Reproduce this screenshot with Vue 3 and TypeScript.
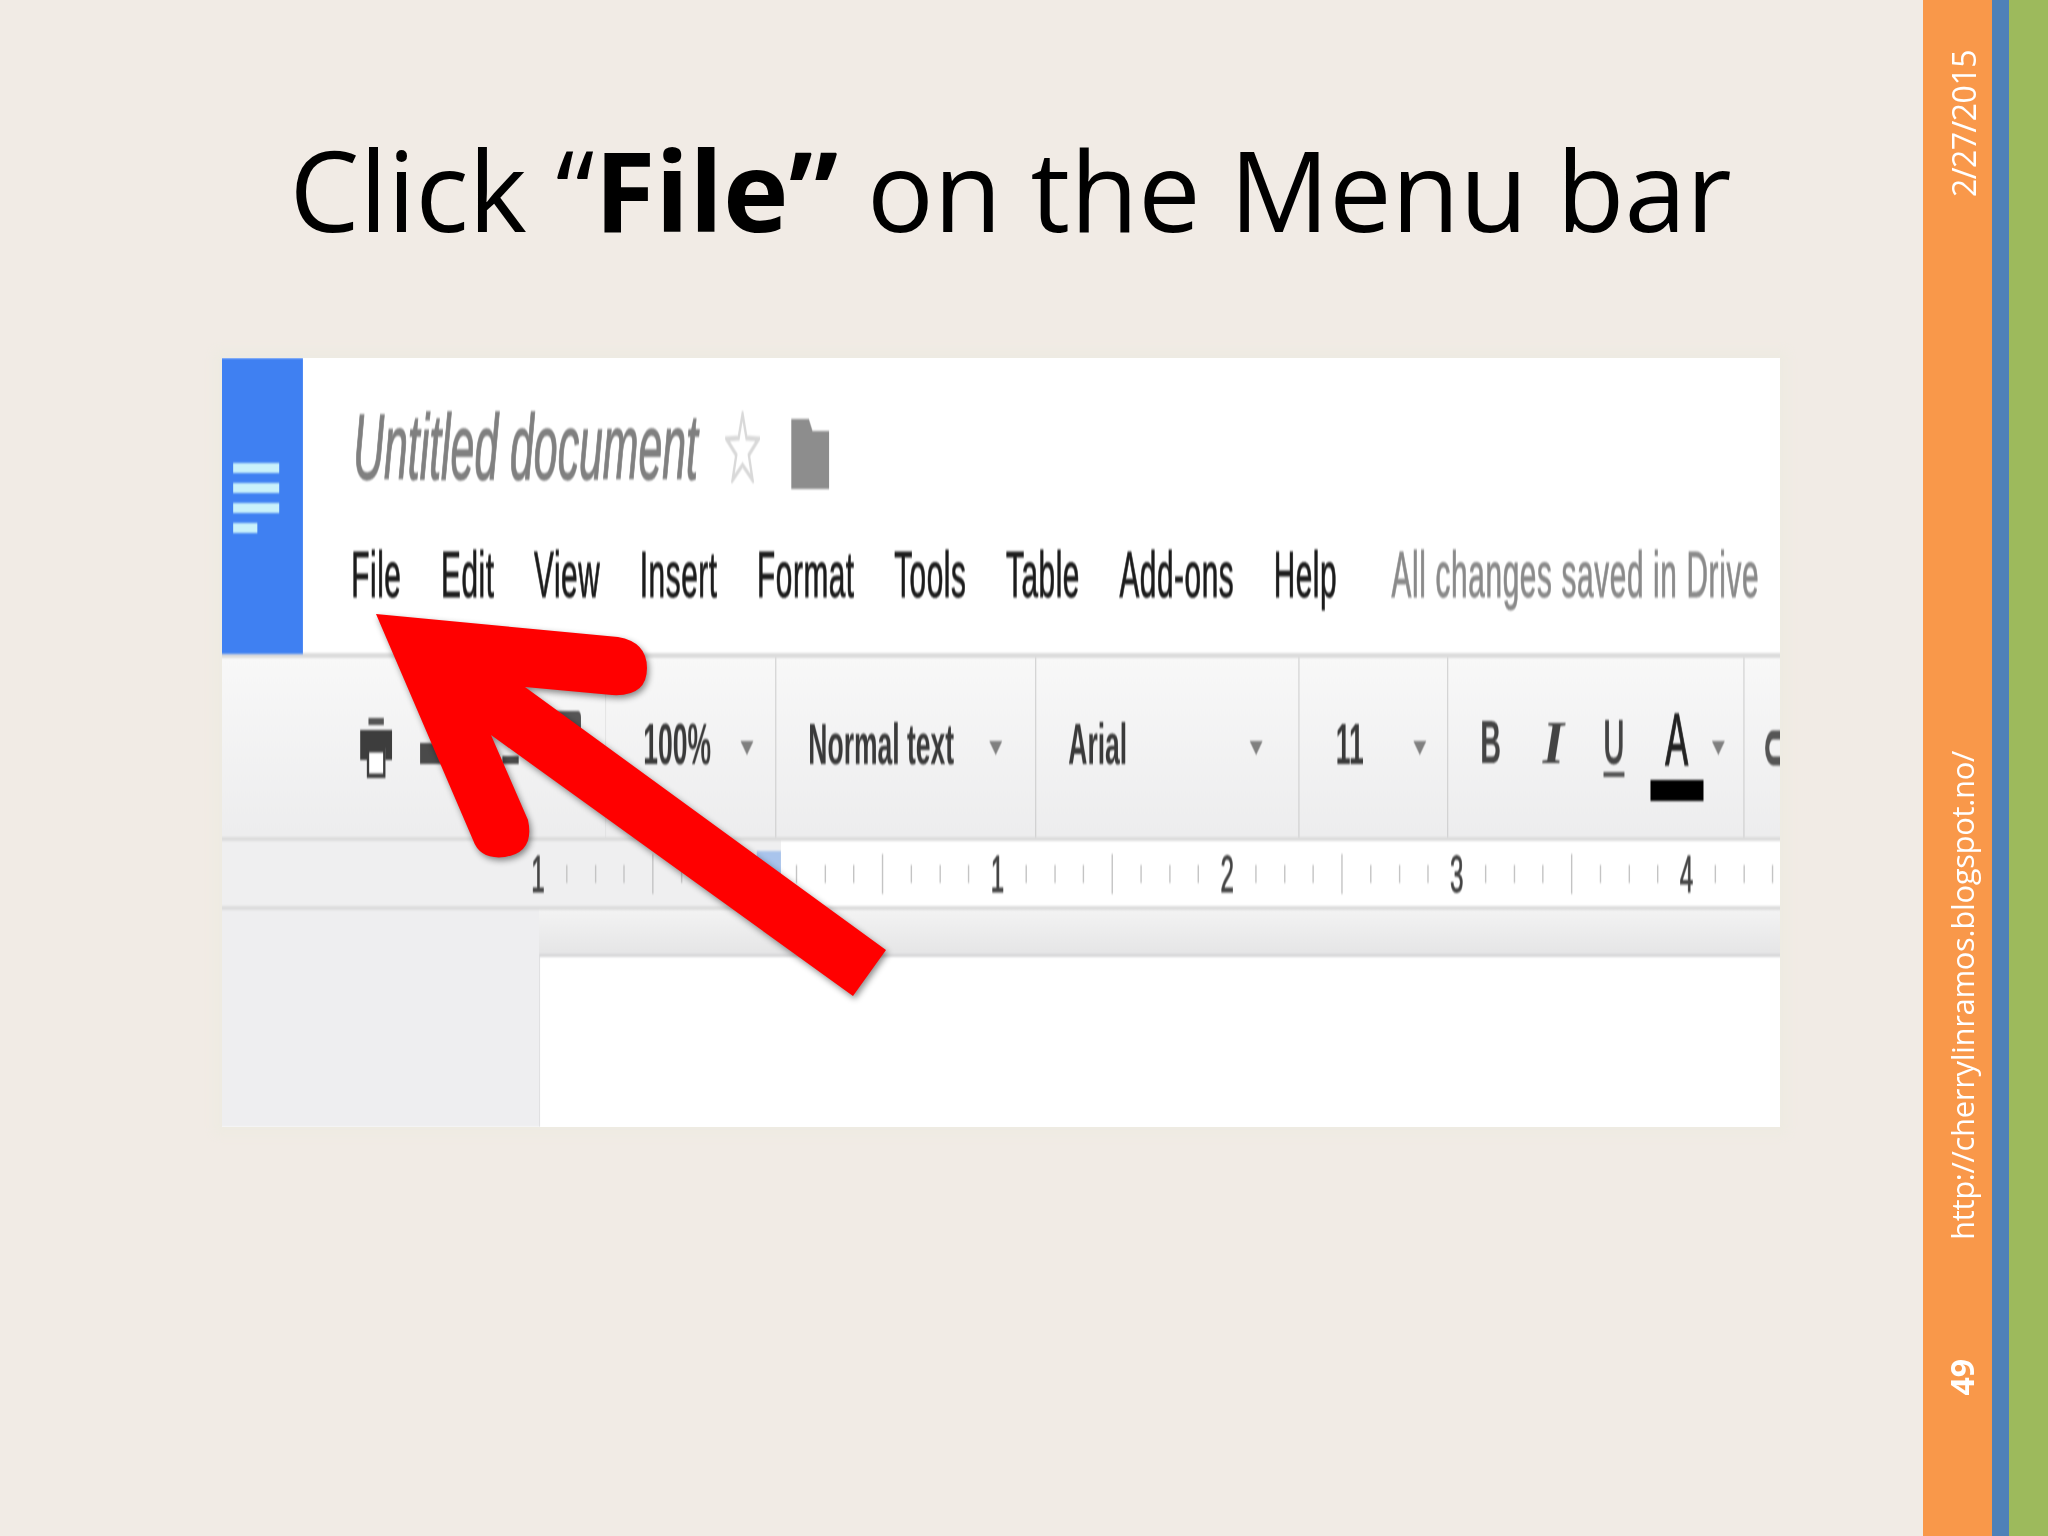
<template>
  <div class="slide">
    <main class="main">
      <h1 class="title">Click “<b>File”</b> on the Menu bar</h1>

      <div class="shot">
        <!-- the original picture is squeezed horizontally, so lay out wide and scale -->
        <div class="shot-inner">
          <header class="head">
            <div class="logo">
              <i class="bar"></i>
              <i class="bar"></i>
              <i class="bar"></i>
              <i class="bar short"></i>
            </div>
            <div class="head-body">
              <div class="doc-row">
                <span class="doc-name">Untitled document</span>
                <svg class="star" viewBox="0 0 75 72">
                  <path d="M37.5 3 L46 27 L72 28 L51 44 L59 69 L37.5 54 L16 69 L24 44 L3 28 L29 27 Z" fill="none" stroke="#d9d9d9" stroke-width="5" />
                </svg>
                <svg class="folder" viewBox="0 0 82 70">
                  <path d="M0 0 H38 L46 12 H82 V70 H0 Z" fill="#8d8d8d" />
                </svg>
              </div>
              <nav class="menu">
                <span v-for="item in menuItems" :key="item">{{ item }}</span>
                <span class="status">All changes saved in Drive</span>
              </nav>
            </div>
          </header>

          <div class="toolbar">
            <div class="seg seg-icons">
              <svg class="printer" viewBox="0 0 69 60">
                <rect x="18" y="0" width="33" height="7" fill="#555" />
                <path d="M0 12 H69 V42 H54 V30 H15 V42 H0 Z" fill="#3d3d3d" />
                <rect x="17" y="32" width="35" height="26" fill="#fff" stroke="#3d3d3d" stroke-width="5" />
              </svg>
              <svg class="undo-icons" viewBox="0 0 346 60">
                <rect x="0" y="32" width="45" height="21" fill="#4a4a4a" />
                <rect x="177" y="45" width="35" height="8" fill="#4a4a4a" />
                <rect x="270" y="0" width="76" height="42" rx="6" fill="#555" />
              </svg>
            </div>
            <div class="seg seg-zoom"><span class="tb-text">100%</span><i class="caret"></i></div>
            <div class="seg seg-style"><span class="tb-text">Normal text</span><i class="caret"></i></div>
            <div class="seg seg-font"><span class="tb-text">Arial</span><i class="caret"></i></div>
            <div class="seg seg-size"><span class="tb-text">11</span><i class="caret"></i></div>
            <div class="seg seg-format">
              <span class="fmt fmt-b">B</span>
              <span class="fmt fmt-i">I</span>
              <span class="fmt fmt-u">U</span>
              <span class="fmt fmt-a">A</span>
              <i class="caret"></i>
            </div>
            <div class="seg seg-rest">
              <svg class="link-icon" viewBox="0 0 60 36">
                <path d="M36 5 H18 A13 13 0 0 0 18 31 H36" fill="none" stroke="#555" stroke-width="9" />
              </svg>
            </div>
          </div>

          <div class="ruler">
            <div v-for="tick in ticks" :key="tick.id" class="cell">
              <span v-if="tick.label" class="num">{{ tick.label }}</span>
              <i v-else-if="tick.kind !== 'none'" class="tick" :class="tick.kind"></i>
            </div>
          </div>
          <div class="band"></div>

          <div class="canvas">
            <div class="gutter"></div>
            <div class="page"></div>
          </div>
        </div>

        <svg class="arrow" viewBox="222 358 1558 769">
          <path
            d="M376 614 L618 637 Q647 642 647 668 Q647 697 612 695 L525 687 L886 950 L853 996 L491 735 L528 820 Q535 852 505 857 Q480 860 473 840 Z"
            fill="#ff0000"
          />
        </svg>
      </div>
    </main>

    <aside class="stripe-orange">
      <span class="side-text date">2/27/2015</span>
      <span class="side-text url">http://cherrylinramos.blogspot.no/</span>
      <span class="side-text page-no">49</span>
    </aside>
    <div class="stripe-blue"></div>
    <div class="stripe-green"></div>
  </div>
</template>

<script setup lang="ts">
interface Tick {
  id: number
  label: string
  kind: 'minor' | 'major' | 'none'
}

const menuItems = ['File', 'Edit', 'View', 'Insert', 'Format', 'Tools', 'Table', 'Add-ons', 'Help']

// ruler runs in eighths of an inch, first number sits at the left page edge
const labels: Record<number, string> = { 0: '1', 16: '1', 24: '2', 32: '3', 40: '4' }
const ticks: Tick[] = []
for (let i = 0; i < 44; i++) {
  let kind: Tick['kind'] = 'minor'
  if (i % 8 === 4) kind = 'major'
  if (i === 8) kind = 'none'
  ticks.push({ id: i, label: labels[i] ?? '', kind })
}
</script>

<style scoped>
.slide {
  display: flex;
  width: 2048px;
  height: 1536px;
  overflow: hidden;
  background: #f1ebe5;
  font-family: "Open Sans", sans-serif;
}

.main {
  width: 1923px;
  flex: none;
  padding-top: 124px;
  box-sizing: border-box;
}

.title {
  margin: 0;
  padding-left: 98px;
  font-size: 111px;
  line-height: 130px;
  font-weight: 400;
  text-align: center;
  color: #000;
  white-space: nowrap;
}

.title b {
  font-weight: 700;
}

.shot {
  position: relative;
  width: 1558px;
  height: 769px;
  margin: 104px 0 0 222px;
  overflow: hidden;
  background: #fff;
  box-shadow: 0 0 10px 8px #eeebe2;
}

.shot-inner {
  display: flex;
  flex-direction: column;
  width: 3350.5px;
  height: 769px;
  transform: scaleX(0.465);
  transform-origin: 0 0;
  filter: blur(0.8px);
  font-family: "Liberation Sans", Arial, sans-serif;
  background: #fff;
}

.head {
  display: flex;
  height: 300px;
  flex: none;
  box-sizing: border-box;
  border-bottom: 5px solid #dcdcdc;
}

.logo {
  display: flex;
  flex-direction: column;
  gap: 10px;
  flex: none;
  width: 174px;
  height: 296px;
  padding: 105px 0 0 24px;
  box-sizing: border-box;
  background: #3f80f2;
}

.bar {
  display: block;
  width: 99px;
  height: 10px;
  background: #c9f1fb;
}

.bar.short {
  width: 52px;
}

.head-body {
  padding: 39px 0 0 104px;
}

.doc-row {
  display: flex;
  align-items: center;
  height: 100px;
  padding-left: 4px;
}

.doc-name {
  font-size: 92px;
  font-style: italic;
  color: #808080;
  white-space: nowrap;
  -webkit-text-stroke: 1.4px #808080;
}

.star {
  width: 75px;
  height: 72px;
  margin-left: 58px;
}

.folder {
  width: 82px;
  height: 70px;
  margin-left: 67px;
  margin-top: 14px;
}

.menu {
  display: flex;
  gap: 85px;
  margin-top: 38px;
  font-size: 64px;
  line-height: 80px;
  color: #1c1c1c;
  letter-spacing: 1.2px;
  white-space: nowrap;
  -webkit-text-stroke: 1px #1c1c1c;
}

.status {
  margin-left: 32px;
  color: #8a8a8a;
  letter-spacing: 1.4px;
  -webkit-text-stroke: 1px #8a8a8a;
}

.toolbar {
  display: flex;
  flex: none;
  height: 183px;
  box-sizing: border-box;
  border-bottom: 4px solid #dcdcdc;
  background: linear-gradient(#f8f8f8, #ededee);
}

.seg {
  display: flex;
  flex: none;
  align-items: center;
  box-sizing: border-box;
  border-right: 2px solid #c8c8c8;
}

.seg-icons {
  width: 826px;
  padding-left: 297px;
  border-right-color: #e2e2e2;
}

.printer {
  width: 69px;
  height: 60px;
  flex: none;
}

.undo-icons {
  width: 346px;
  height: 60px;
  flex: none;
  margin: -14px 0 0 60px;
}

.seg-zoom {
  width: 366px;
  padding: 0 47px 0 80px;
}

.seg-style {
  width: 559px;
  padding: 0 71px 0 69px;
}

.seg-font {
  width: 566px;
  padding: 0 77px 0 69px;
}

.seg-size {
  width: 320px;
  padding: 0 45px 0 78px;
}

.tb-text {
  margin-bottom: 8px;
  font-size: 57px;
  font-weight: 700;
  color: #3a3a3a;
  white-space: nowrap;
}

.caret {
  display: block;
  width: 0;
  height: 0;
  margin-left: auto;
  border-left: 14px solid transparent;
  border-right: 14px solid transparent;
  border-top: 14px solid #808080;
}

.seg-format {
  width: 637px;
  padding: 0 40px 12px 69px;
}

.seg-format .caret {
  margin-top: 12px;
}

.fmt {
  font-size: 62px;
  color: #444;
  line-height: 70px;
}

.fmt-b {
  font-weight: 700;
}

.fmt-i {
  display: inline-block;
  margin-left: 100px;
  font-style: italic;
  font-family: "Liberation Serif", serif;
  font-weight: 700;
  transform: scaleX(1.9);
}

.fmt-u {
  position: relative;
  margin-left: 96px;
  -webkit-text-stroke: 2px #444;
}

.fmt-u::after {
  content: "";
  position: absolute;
  left: 0;
  right: 0;
  bottom: 0;
  height: 5px;
  background: #555;
}

.fmt-a {
  position: relative;
  margin: 0 0 3px 88px;
  color: #222;
  font-size: 74px;
  -webkit-text-stroke: 1.5px #222;
}

.fmt-a::after {
  content: "";
  position: absolute;
  left: -32px;
  top: 75px;
  width: 114px;
  height: 21px;
  background: #000;
}

.seg-rest {
  flex: 1;
  min-width: 0;
  overflow: hidden;
  border-right: 0;
}

.link-icon {
  width: 60px;
  height: 36px;
  margin-left: 44px;
  flex: none;
}

.ruler {
  display: flex;
  flex: none;
  align-items: center;
  height: 69px;
  padding-left: 648.7px;
  box-sizing: border-box;
  overflow: hidden;
  border-bottom: 4px solid #dcdcdc;
  background:
    linear-gradient(#a9c4ec, #a9c4ec) 1150px 10px / 52px 28px no-repeat,
    linear-gradient(to right, #efeff0 1202px, #fff 1202px);
}

.cell {
  display: flex;
  flex: 0 0 61.76px;
  align-items: center;
  justify-content: center;
  height: 100%;
}

.tick {
  display: block;
  width: 3px;
  height: 18px;
  background: #c4c4c4;
}

.tick.major {
  height: 40px;
}

.num {
  font-size: 52px;
  line-height: 60px;
  color: #444;
  -webkit-text-stroke: 1px #444;
}

.band {
  flex: none;
  height: 44px;
  box-sizing: border-box;
  background:
    linear-gradient(to right, #eeeef0 682px, transparent 682px),
    linear-gradient(#f3f3f3, #e5e5e6);
}

.canvas {
  display: flex;
  flex: 1;
}

.gutter {
  width: 682px;
  flex: none;
  background: #eeeef0;
}

.page {
  flex: 1;
  box-sizing: border-box;
  border-top: 3px solid #d6d6d8;
  border-left: 2px solid #dcdcde;
  background: #fff;
}

.arrow {
  position: absolute;
  left: 0;
  top: 0;
  width: 1558px;
  height: 769px;
  filter: drop-shadow(2px 3px 3px rgba(0, 0, 0, 0.45));
}

.stripe-orange {
  display: flex;
  flex-direction: column;
  align-items: center;
  flex: none;
  width: 69px;
  padding-left: 8px;
  box-sizing: border-box;
  background: #f9984a;
}

.stripe-blue {
  flex: none;
  width: 17px;
  background: #4f81b8;
}

.stripe-green {
  flex: 1;
  background: #9dba5c;
}

.side-text {
  writing-mode: vertical-rl;
  transform: rotate(180deg);
  color: #fff;
  font-size: 32px;
  line-height: 40px;
  white-space: nowrap;
}

.date {
  margin: 50px 0 0 5px;
  letter-spacing: -0.5px;
}

.url {
  margin-top: 554px;
  font-size: 31px;
  letter-spacing: -0.35px;
}

.page-no {
  margin-top: 119px;
  font-weight: 700;
}
</style>
